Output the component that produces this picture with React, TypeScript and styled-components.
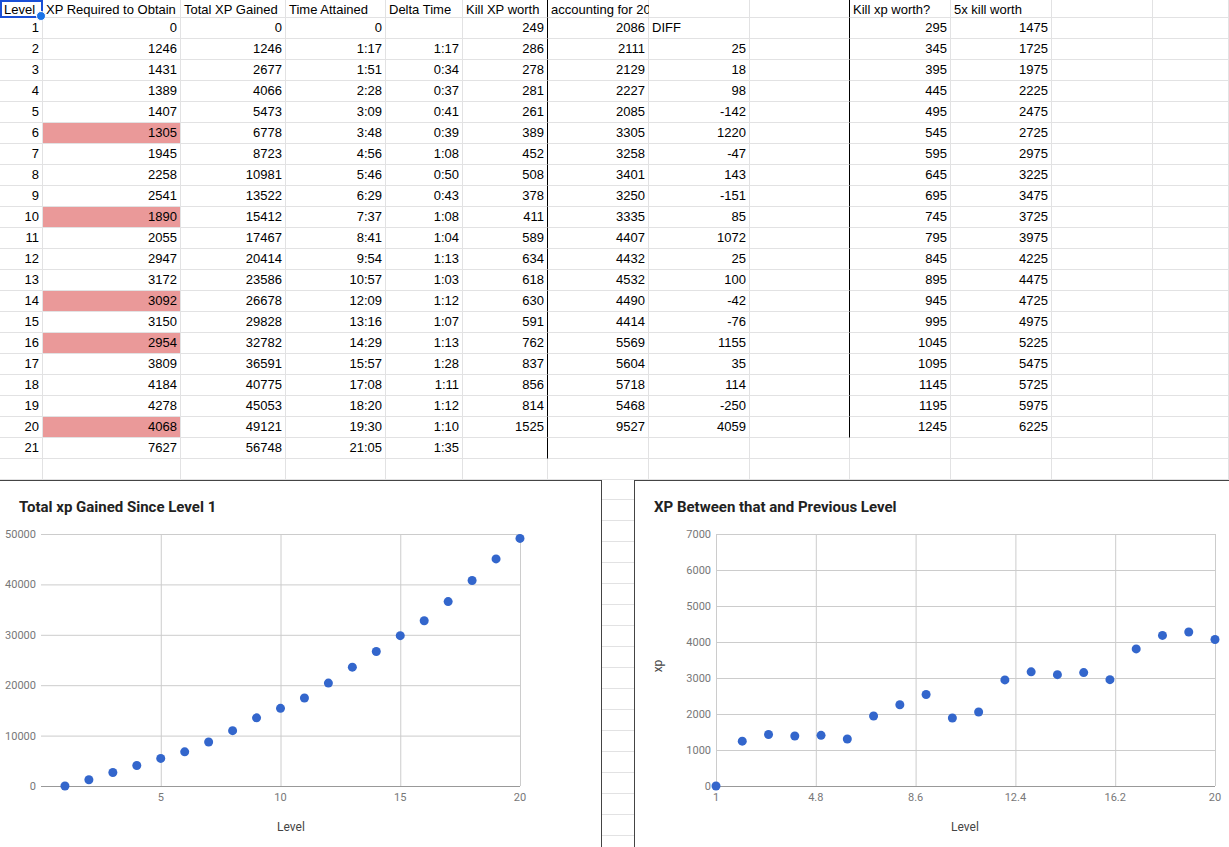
import React from 'react';
import styled, { createGlobalStyle } from 'styled-components';

const GlobalStyle = createGlobalStyle`
  body { margin: 0; background: #fff; font-family: "Liberation Sans", Arial, sans-serif; overflow: hidden; }
`;

const COLS = [43, 138, 105, 100, 77, 85, 101, 101, 100, 101, 101, 101, 76];

const xpReq = [0, 1246, 1431, 1389, 1407, 1305, 1945, 2258, 2541, 1890, 2055, 2947, 3172, 3092, 3150, 2954, 3809, 4184, 4278, 4068, 7627];
const total = [0, 1246, 2677, 4066, 5473, 6778, 8723, 10981, 13522, 15412, 17467, 20414, 23586, 26678, 29828, 32782, 36591, 40775, 45053, 49121, 56748];
const time = ['0', '1:17', '1:51', '2:28', '3:09', '3:48', '4:56', '5:46', '6:29', '7:37', '8:41', '9:54', '10:57', '12:09', '13:16', '14:29', '15:57', '17:08', '18:20', '19:30', '21:05'];
const delta = ['', '1:17', '0:34', '0:37', '0:41', '0:39', '1:08', '0:50', '0:43', '1:08', '1:04', '1:13', '1:03', '1:12', '1:07', '1:13', '1:28', '1:11', '1:12', '1:10', '1:35'];
const kill = [249, 286, 278, 281, 261, 389, 452, 508, 378, 411, 589, 634, 618, 630, 591, 762, 837, 856, 814, 1525];
const acc = [2086, 2111, 2129, 2227, 2085, 3305, 3258, 3401, 3250, 3335, 4407, 4432, 4532, 4490, 4414, 5569, 5604, 5718, 5468, 9527];
const diff = [25, 18, 98, -142, 1220, -47, 143, -151, 85, 1072, 25, 100, -42, -76, 1155, 35, 114, -250, 4059];
const red = [6, 10, 14, 16, 20];

type CellDef = { text?: string | number; align?: 'left' | 'right'; fill?: boolean; thick?: boolean; selected?: boolean };

const Sheet = styled.div`
  display: grid;
  grid-template-columns: ${COLS.map((c) => `${c}px`).join(' ')};
  grid-template-rows: 18px repeat(22, 21px);
  font-size: 13px;
  color: #000;
`;

const Cell = styled.div<{ $align: string; $fill: boolean; $thick: boolean; $selected: boolean }>`
  position: relative;
  box-sizing: border-box;
  border-right: ${({ $thick }) => ($thick ? '1px solid #000' : '1px solid #e2e2e3')};
  border-bottom: 1px solid #e2e2e3;
  background: ${({ $fill }) => ($fill ? '#ea9999' : '#fff')};
  text-align: ${({ $align }) => $align};
  padding: 0 3px;
  line-height: 20px;
  white-space: nowrap;
  overflow: visible;
  ${({ $selected }) =>
    $selected &&
    `border: 2px solid #1a4fd6; line-height: 15px; padding: 0 2px;
     &::after { content: ''; position: absolute; right: -5px; bottom: -5px; width: 8px; height: 8px; border-radius: 50%; background: #1a73e8; border: 1px solid #fff; z-index: 2; }`}
`;

const buildRows = (): CellDef[][] => {
  const rows: CellDef[][] = [];
  rows.push([
    { text: 'Level', align: 'left', selected: true },
    { text: 'XP Required to Obtain', align: 'left' },
    { text: 'Total XP Gained', align: 'left' },
    { text: 'Time Attained', align: 'left' },
    { text: 'Delta Time', align: 'left' },
    { text: 'Kill XP worth', align: 'left', thick: true },
    { text: 'accounting for 20xp/sec passive incoming', align: 'left' },
    {},
    { thick: true },
    { text: 'Kill xp worth?', align: 'left' },
    { text: '5x kill worth', align: 'left' },
    {},
    {},
  ]);
  for (let i = 0; i < 22; i++) {
    const lvl = i + 1;
    const has = i < 21;
    rows.push([
      { text: has ? lvl : '' },
      { text: has ? xpReq[i] : '', fill: red.includes(lvl) },
      { text: has ? total[i] : '' },
      { text: has ? time[i] : '' },
      { text: has ? delta[i] : '' },
      { text: i < 20 ? kill[i] : '', thick: i < 21 },
      { text: i < 20 ? acc[i] : '' },
      i === 0 ? { text: 'DIFF', align: 'left' } : { text: i < 20 ? diff[i - 1] : '' },
      { thick: i < 20 },
      { text: i < 20 ? 295 + 50 * i : '' },
      { text: i < 20 ? 1475 + 250 * i : '' },
      {},
      {},
    ]);
  }
  return rows;
};

const Bottom = styled.div`
  display: flex;
  height: 367px;
`;

const Panel = styled.div<{ $w: number; $left: boolean; $right: boolean }>`
  width: ${({ $w }) => $w}px;
  flex: none;
  box-sizing: border-box;
  border-top: 1px solid #444;
  border-left: ${({ $left }) => ($left ? '1px solid #444' : 'none')};
  border-right: ${({ $right }) => ($right ? '1px solid #444' : 'none')};
  background: #fff;
`;

const Gap = styled.div`
  width: 32px;
  flex: none;
  background: repeating-linear-gradient(to bottom, #fff 0 20px, #e2e2e3 20px 21px);
  background-position: 0 -1px;
`;

type ChartProps = {
  title: string;
  left: number;
  right: number;
  xMin: number;
  xMax: number;
  xTicks: { v: number; label: string }[];
  yMax: number;
  yStep: number;
  points: [number, number][];
  yTitle?: boolean;
  levelX: number;
  w: number;
};

const Chart = ({ title, left, right, xMin, xMax, xTicks, yMax, yStep, points, yTitle, levelX, w }: ChartProps) => {
  const top = 53;
  const bottom = 305;
  const sx = (v: number) => left + ((v - xMin) / (xMax - xMin)) * (right - left);
  const sy = (v: number) => bottom - (v / yMax) * (bottom - top);
  const yTicks: number[] = [];
  for (let v = 0; v <= yMax; v += yStep) yTicks.push(v);
  return (
    <svg width={w} height={366} style={{ display: 'block' }} fontFamily="Roboto, sans-serif">
      <text x={19} y={31} fontSize={15} fontWeight={700} fill="#222">{title}</text>
      {yTicks.map((v) => (
        <g key={v}>
          <line x1={left} x2={right} y1={sy(v) + 0.5} y2={sy(v) + 0.5} stroke={v === 0 ? '#999' : '#ccc'} />
          <text x={left - 5} y={sy(v) + 4} fontSize={11} fill="#777" textAnchor="end">{v}</text>
        </g>
      ))}
      {xTicks.map((t) => (
        <g key={t.label}>
          <line x1={sx(t.v) + 0.5} x2={sx(t.v) + 0.5} y1={top} y2={bottom} stroke="#ccc" />
          <text x={sx(t.v)} y={320} fontSize={11} fill="#777" textAnchor="middle">{t.label}</text>
        </g>
      ))}
      {points.map(([x, y], i) => (
        <circle key={i} cx={sx(x)} cy={sy(y)} r={4.5} fill="#3366cc" />
      ))}
      <text x={levelX} y={350} fontSize={12} fill="#444" textAnchor="middle">Level</text>
      {yTitle && (
        <text x={0} y={0} fontSize={12} fill="#444" textAnchor="middle" transform={`translate(${left - 54} 185) rotate(-90)`}>xp</text>
      )}
    </svg>
  );
};

export default function App() {
  const rows = buildRows();
  const totalPts = total.slice(0, 20).map((v, i) => [i + 1, v] as [number, number]);
  const reqPts = xpReq.slice(0, 20).map((v, i) => [i + 1, v] as [number, number]);
  return (
    <>
      <GlobalStyle />
      <Sheet>
        {rows.map((r, ri) =>
          r.map((c, ci) => (
            <Cell
              key={`${ri}-${ci}`}
              $align={c.align ?? 'right'}
              $fill={!!c.fill}
              $thick={!!c.thick}
              $selected={!!c.selected}
            >
              {c.text}
            </Cell>
          ))
        )}
      </Sheet>
      <Bottom>
        <Panel $w={602} $left={false} $right>
          <Chart
            title="Total xp Gained Since Level 1"
            left={41}
            right={520}
            xMin={0}
            xMax={20}
            xTicks={[5, 10, 15, 20].map((v) => ({ v, label: String(v) }))}
            yMax={50000}
            yStep={10000}
            points={totalPts}
            levelX={291}
            w={600}
          />
        </Panel>
        <Gap />
        <Panel $w={596} $left $right={false}>
          <Chart
            title="XP Between that and Previous Level"
            left={81}
            right={580}
            xMin={1}
            xMax={20}
            xTicks={[1, 4.8, 8.6, 12.4, 16.2, 20].map((v) => ({ v, label: String(v) }))}
            yMax={7000}
            yStep={1000}
            points={reqPts}
            yTitle
            levelX={330}
            w={595}
          />
        </Panel>
      </Bottom>
    </>
  );
}
